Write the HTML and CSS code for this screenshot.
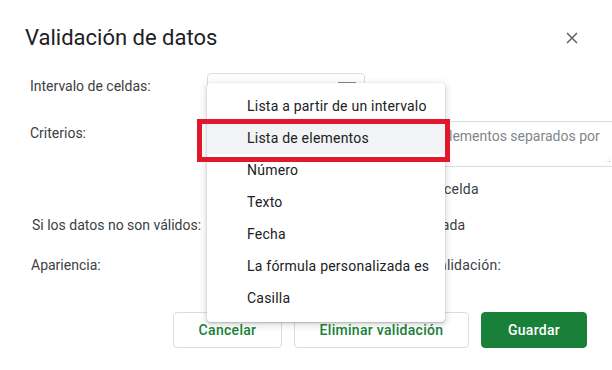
FILE: index.html
```html
<!DOCTYPE html>
<html lang="es">
<head>
<meta charset="utf-8">
<title>Validación de datos</title>
<link rel="stylesheet" href="styles.css">
</head>
<body>
<div class="dialog">
  <div class="header">
    <h1 class="title">Validación de datos</h1>
    <button class="close" aria-label="Cerrar">
      <svg width="12" height="12" viewBox="0 0 12 12"><path d="M1 1L11 11M11 1L1 11" stroke="#5f6368" stroke-width="1.5" fill="none"/></svg>
    </button>
  </div>

  <div class="row row-range">
    <div class="label">Intervalo de celdas:</div>
    <div class="control">
      <div class="range-input">
        <span class="range-value">Hoja1!A1:A10</span>
        <svg class="grid-icon" width="18" height="16" viewBox="0 0 18 16"><rect x="1" y="1" width="16" height="14" fill="none" stroke="#80868b" stroke-width="2"/><path d="M1 6H17M1 10.5H17M6.5 1V15M11.5 1V15" stroke="#80868b" stroke-width="1.5"/></svg>
      </div>
    </div>
  </div>

  <div class="row row-criteria">
    <div class="label">Criterios:</div>
    <div class="control criteria">
      <div class="select">Lista de elementos</div>
      <div class="textarea"><span class="placeholder">Introduce elementos separados por comas</span><span class="grip"></span></div>
    </div>
  </div>

  <div class="row row-check">
    <div class="label"></div>
    <div class="control">
      <span class="checkbox checked"></span>
      <span class="opt-text">Mostrar lista desplegable en la celda</span>
    </div>
  </div>

  <div class="row row-invalid">
    <div class="label">Si los datos no son válidos:</div>
    <div class="control">
      <span class="radio on"></span>
      <span class="opt-text">Mostrar aviso</span>
      <span class="radio"></span>
      <span class="opt-text">Rechazar entrada</span>
    </div>
  </div>

  <div class="row row-appearance">
    <div class="label">Apariencia:</div>
    <div class="control">
      <span class="checkbox"></span>
      <span class="opt-text">Mostrar texto de ayuda para la validación:</span>
    </div>
  </div>

  <div class="actions">
    <button class="btn btn-cancel">Cancelar</button>
    <button class="btn btn-remove">Eliminar validación</button>
    <button class="btn btn-save">Guardar</button>
  </div>

  <ul class="menu">
    <li class="item">Lista a partir de un intervalo</li>
    <li class="item selected">Lista de elementos</li>
    <li class="item">Número</li>
    <li class="item">Texto</li>
    <li class="item">Fecha</li>
    <li class="item">La fórmula personalizada es</li>
    <li class="item">Casilla</li>
  </ul>
  <div class="highlight-box"></div>
</div>
</body>
</html>
```

FILE: styles.css
```css
* { box-sizing: border-box; }
html, body {
  margin: 0;
  padding: 0;
  background: #ffffff;
}
body {
  width: 612px;
  height: 370px;
  overflow: hidden;
  font-family: Roboto, "Liberation Sans", Arial, sans-serif;
  font-size: 14px;
  letter-spacing: 0.22px;
  color: #3c4043;
}
.dialog {
  position: relative;
  width: 612px;
  height: 370px;
  background: #fff;
}
.header {
  display: flex;
  align-items: center;
  justify-content: space-between;
  height: 64px;
  padding: 12px 34px 0 25px;
}
.title {
  margin: 0;
  font-size: 22px;
  font-weight: 400;
  line-height: 28px;
  letter-spacing: 0;
  color: #202124;
}
.close {
  border: 0;
  background: none;
  padding: 0;
  width: 12px;
  height: 12px;
  display: flex;
}
.row {
  display: flex;
  align-items: flex-start;
  padding-left: 30px;
}
.label {
  width: 177px;
  flex: none;
  line-height: 20px;
  white-space: nowrap;
  letter-spacing: 0;
  color: #3c4043;
}
.control {
  display: flex;
  align-items: center;
  flex: 1;
  min-width: 0;
}
.row-range { margin-top: 9px; height: 36px; }
.row-range .label { padding-top: 3px; }
.range-input {
  width: 158px;
  height: 36px;
  border: 1px solid #dadce0;
  border-radius: 4px;
  display: flex;
  align-items: flex-start;
  justify-content: space-between;
  padding: 0 8px 0 10px;
  color: #202124;
}
.range-value { line-height: 34px; }
.grid-icon { margin-top: 8px; }
.row-criteria { margin-top: 12px; height: 46px; }
.row-criteria .label { padding-top: 2px; }
.criteria { align-items: flex-start; }
.select {
  width: 150px;
  height: 36px;
  flex: none;
  border: 1px solid #dadce0;
  border-radius: 4px;
  line-height: 34px;
  padding-left: 10px;
  color: #202124;
}
.textarea {
  position: relative;
  flex: none;
  margin-left: 13px;
  width: 244px;
  height: 46px;
  border: 1px solid #dadce0;
  border-radius: 2px;
  padding: 4px 8px;
  line-height: 20px;
}
.placeholder { color: #80868b; letter-spacing: 0; }
.grip {
  position: absolute;
  right: 2px;
  bottom: 3px;
  width: 6px;
  height: 6px;
  background:
    radial-gradient(circle, #9aa0a6 0.8px, transparent 1px) 0 0 / 3px 3px;
  clip-path: polygon(100% 0, 100% 100%, 0 100%);
}
.row-check { margin-top: 12px; height: 18px; }
.checkbox {
  width: 18px;
  height: 18px;
  flex: none;
  border: 2px solid #5f6368;
  border-radius: 2px;
  margin-right: 8px;
}
.checkbox.checked {
  background: #188038;
  border-color: #188038;
}
.row-check .checkbox { margin-right: 18px; }
.opt-text {
  line-height: 20px;
  color: #3c4043;
  white-space: nowrap;
}
.radio {
  width: 18px;
  height: 18px;
  flex: none;
  border: 2px solid #5f6368;
  border-radius: 50%;
  margin-right: 8px;
}
.radio.on { border-color: #188038; }
.radio + .opt-text + .radio { margin-left: 6px; }
.row-invalid { margin-top: 18px; height: 20px; padding-left: 32px; }
.row-invalid .label { width: 175px; }
.row-appearance { margin-top: 20px; height: 20px; padding-left: 31px; }
.row-appearance .label { width: 176px; }
.row-appearance .checkbox { margin-top: 2px; }
.actions {
  display: flex;
  justify-content: flex-end;
  gap: 12px;
  margin-top: 37px;
  padding-right: 25px;
}
.btn {
  height: 36px;
  border-radius: 4px;
  font-family: Roboto, "Liberation Sans", Arial, sans-serif;
  font-size: 14px;
  font-weight: 500;
  letter-spacing: 0.3px;
  padding: 0;
  cursor: pointer;
}
.btn-cancel, .btn-remove {
  background: #fff;
  border: 1px solid #dadce0;
  color: #188038;
}
.btn-cancel { width: 109px; }
.btn-remove { width: 175px; }
.btn-save {
  width: 106px;
  background: #188038;
  border: 1px solid #188038;
  color: #fff;
}
.menu {
  position: absolute;
  left: 207px;
  top: 83px;
  width: 238px;
  margin: 0;
  padding: 7px 0 8px;
  list-style: none;
  background: #fff;
  border-radius: 4px;
  box-shadow: 0 2px 6px 2px rgba(60, 64, 67, 0.15), 0 1px 2px rgba(60, 64, 67, 0.3);
}
.item {
  height: 32px;
  line-height: 32px;
  padding-left: 40px;
  color: #202124;
  white-space: nowrap;
}
.item.selected { background: #f1f3f4; }
.highlight-box {
  position: absolute;
  left: 197px;
  top: 119px;
  width: 253px;
  height: 43px;
  border: 5px solid #e3172b;
}
```
